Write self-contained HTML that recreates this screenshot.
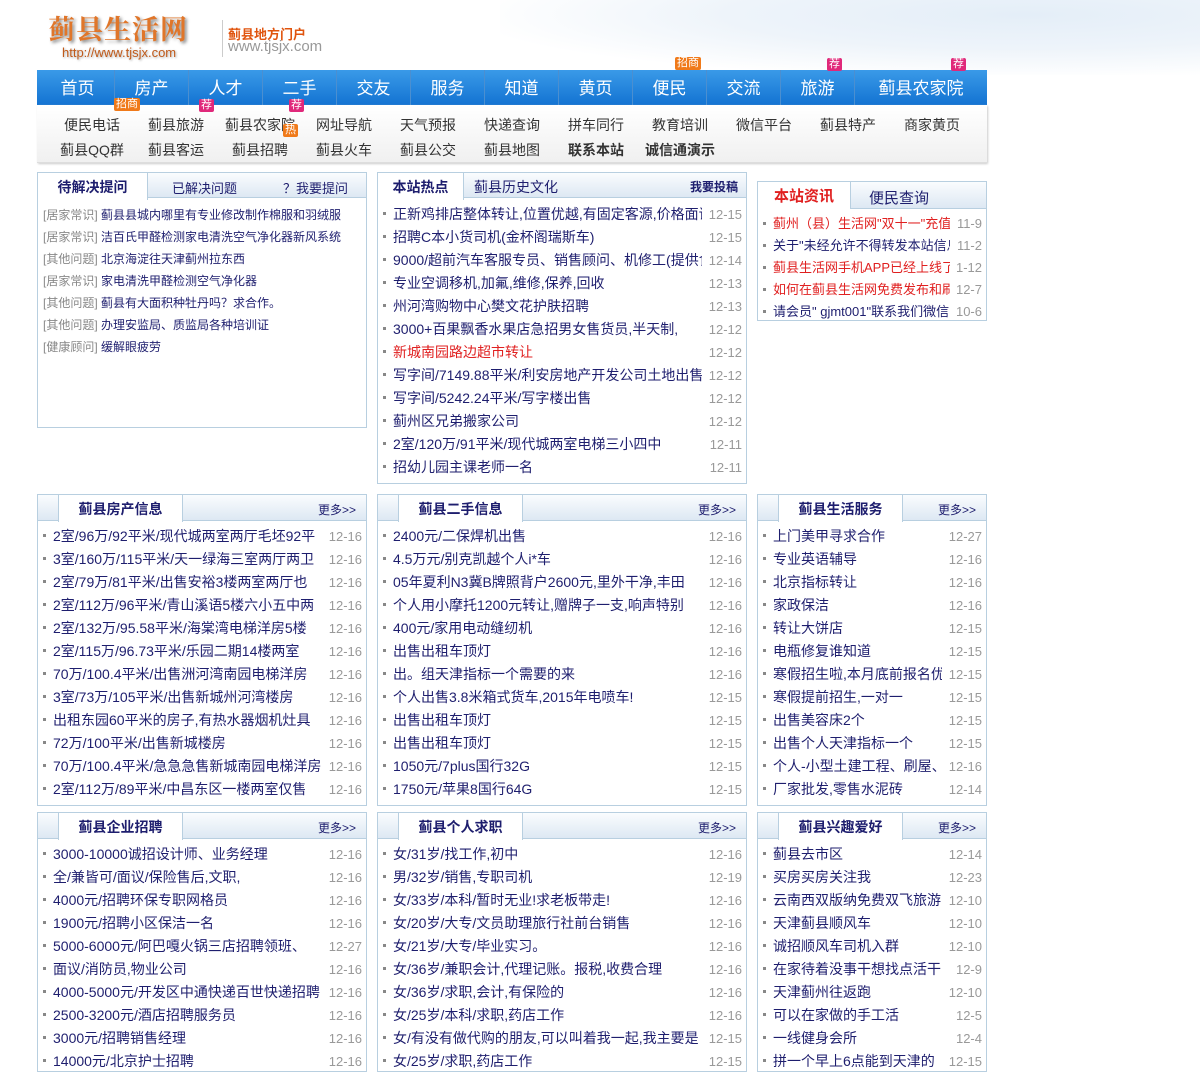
<!DOCTYPE html>
<html><head><meta charset="utf-8"><style>
*{margin:0;padding:0;box-sizing:border-box}
body{width:1200px;height:1063px;overflow:hidden;background:#fff;font-family:"Liberation Sans","Noto Sans CJK SC",sans-serif;font-size:14px;color:#1e1e6e;position:relative}
.bgsky{position:absolute;left:500px;top:0;width:700px;height:75px;background:radial-gradient(ellipse at 75% 20%,#e4eef8 0%,#eef4fa 40%,rgba(255,255,255,0) 75%);}
.logo{position:absolute;left:48px;top:8px;width:155px}
.logo .t{font-size:27px;font-weight:bold;color:#e0762a;letter-spacing:1px;text-shadow:2px 2px 3px #888;font-family:"Noto Serif CJK SC",serif}
.logo .u{font-size:13px;color:#c05a1a;margin-left:14px;text-shadow:1px 1px 2px #aaa;margin-top:-2px}
.sep{position:absolute;left:222px;top:20px;width:1px;height:37px;background:#ccc}
.slog{position:absolute;left:228px;top:24px;font-size:13px;font-weight:bold;color:#e0540e}
.www{position:absolute;left:228px;top:38px;font-size:15px;color:#999}
.nav{position:absolute;left:37px;top:70px;width:950px;height:35px;background:linear-gradient(#3a9ae8,#1373d2);display:flex;padding-left:4px}
.nav div{width:74px;text-align:center;color:#fff;font-size:17px;line-height:38px;border-right:1px solid #4b8fd0;position:relative}
.nav div:last-child{width:132px;border:none}
.sub{position:absolute;left:37px;top:105px;width:950px;height:58px;background:linear-gradient(#fff,#f0f0f0);border-bottom:1px solid #ddd;box-shadow:1px 1px 2px #ccc}
.row{position:absolute;left:13px;display:flex}
.row div{width:84px;text-align:center;font-size:14px;color:#333}
.badge{position:absolute;font-size:11px;color:#fff;line-height:13px;padding:0 2px;border-radius:2px}
.o{background:#f07a1a}.p{background:#e0287a}
.box{position:absolute;border:1px solid #b8cfe0;background:#fff;overflow:hidden}
.hd{height:26px;background:linear-gradient(#fafcfe,#dde8f3);border-bottom:1px solid #b8cfe0;position:relative}
.tab{position:absolute;top:0;height:27px;background:#fff;border-left:1px solid #b8cfe0;border-right:1px solid #b8cfe0;text-align:center;font-weight:bold;font-size:14px;line-height:28px;color:#1e1e6e}
.more{position:absolute;right:10px;top:6px;font-size:12px;color:#1e1e6e}
ul{list-style:none}
li{height:23px;line-height:23px;white-space:nowrap;position:relative;padding-left:15px;overflow:hidden}
li:before{content:"";position:absolute;left:5px;top:9px;width:3px;height:3px;background:#888}
li span{position:absolute;right:0;top:0;background:#fff;color:#999;font-size:13px;width:44px;text-align:right;padding-right:4px}
.r{color:#e02020}
.q li{font-size:12px;height:22px;line-height:22px;padding-left:5px}
.q li:before{display:none}
.q i{font-style:normal;color:#888}
</style></head><body>
<div class="bgsky"></div>
<div class="logo"><div class="t">蓟县生活网</div><div class="u">http://www.tjsjx.com</div></div>
<div class="sep"></div>
<div class="slog">蓟县地方门户</div>
<div class="www">www.tjsjx.com</div>
<div class="nav"><div>首页</div><div>房产</div><div>人才</div><div>二手</div><div>交友</div><div>服务</div><div>知道</div><div>黄页</div><div>便民<span class="badge o" style="left:42px;top:-13px">招商</span></div><div>交流</div><div>旅游<span class="badge p" style="left:46px;top:-12px">荐</span></div><div>蓟县农家院<span class="badge p" style="left:96px;top:-12px">荐</span></div></div>
<div class="sub">
<div class="row" style="top:10px"><div>便民电话</div><div>蓟县旅游</div><div>蓟县农家院</div><div>网址导航</div><div>天气预报</div><div>快递查询</div><div>拼车同行</div><div>教育培训</div><div>微信平台</div><div>蓟县特产</div><div>商家黄页</div></div>
<div class="row" style="top:35px"><div>蓟县QQ群</div><div>蓟县客运</div><div>蓟县招聘</div><div>蓟县火车</div><div>蓟县公交</div><div>蓟县地图</div><div style="font-weight:bold">联系本站</div><div style="font-weight:bold">诚信通演示</div></div>
<span class="badge o" style="left:77px;top:-7px">招商</span>
<span class="badge p" style="left:162px;top:-6px">荐</span>
<span class="badge p" style="left:252px;top:-6px">荐</span>
<span class="badge o" style="left:246px;top:19px">热</span>
</div>

<div class="box" style="left:37px;top:172px;width:330px;height:256px">
<div class="hd" style="height:25px"><div class="tab" style="left:0;width:110px;border-left:none;color:#1e1e6e">待解决提问</div><span style="position:absolute;left:134px;top:5px;font-size:13px">已解决问题</span><span style="position:absolute;left:245px;top:5px;font-size:13px">？我要提问</span></div>
<ul class="q" style="margin-top:6px">
<li><i>[居家常识]</i> 蓟县县城内哪里有专业修改制作棉服和羽绒服</li>
<li><i>[居家常识]</i> 洁百氏甲醛检测家电清洗空气净化器新风系统</li>
<li><i>[其他问题]</i> 北京海淀往天津蓟州拉东西</li>
<li><i>[居家常识]</i> 家电清洗甲醛检测空气净化器</li>
<li><i>[其他问题]</i> 蓟县有大面积种牡丹吗？求合作。</li>
<li><i>[其他问题]</i> 办理安监局、质监局各种培训证</li>
<li><i>[健康顾问]</i> 缓解眼疲劳</li>
</ul></div>

<div class="box" style="left:377px;top:172px;width:370px;height:312px">
<div class="hd" style="height:25px"><div class="tab" style="left:0;width:86px;border-left:none">本站热点</div><span style="position:absolute;left:96px;top:4px;font-size:14px">蓟县历史文化</span><span style="position:absolute;right:8px;top:5px;font-size:12px;font-weight:bold">我要投稿</span></div>
<ul style="margin-top:5px">
<li>正新鸡排店整体转让,位置优越,有固定客源,价格面议<span>12-15</span></li>
<li>招聘C本小货司机(金杯阁瑞斯车)<span>12-15</span></li>
<li>9000/超前汽车客服专员、销售顾问、机修工(提供食宿)<span>12-14</span></li>
<li>专业空调移机,加氟,维修,保养,回收<span>12-13</span></li>
<li>州河湾购物中心樊文花护肤招聘<span>12-13</span></li>
<li>3000+百果飘香水果店急招男女售货员,半天制,<span>12-12</span></li>
<li class="r">新城南园路边超市转让<span>12-12</span></li>
<li>写字间/7149.88平米/利安房地产开发公司土地出售<span>12-12</span></li>
<li>写字间/5242.24平米/写字楼出售<span>12-12</span></li>
<li>蓟州区兄弟搬家公司<span>12-12</span></li>
<li>2室/120万/91平米/现代城两室电梯三小四中<span>12-11</span></li>
<li>招幼儿园主课老师一名<span>12-11</span></li>
</ul></div>

<div class="box" style="left:757px;top:181px;width:230px;height:140px">
<div class="hd" style="height:27px"><div class="tab" style="left:0;width:93px;border-left:none;color:#e02020;font-size:15px;line-height:30px">本站资讯</div><span style="position:absolute;left:111px;top:5px;font-size:15px">便民查询</span></div>
<ul style="margin-top:4px;font-size:13px">
<li class="r" style="height:22px;line-height:22px">蓟州（县）生活网"双十一"充值大<span style="width:36px">11-9</span></li>
<li style="height:22px;line-height:22px">关于"未经允许不得转发本站信息<span style="width:36px">11-2</span></li>
<li class="r" style="height:22px;line-height:22px">蓟县生活网手机APP已经上线了<span style="width:36px">1-12</span></li>
<li class="r" style="height:22px;line-height:22px">如何在蓟县生活网免费发布和刷新<span style="width:36px">12-7</span></li>
<li style="height:22px;line-height:22px">请会员" gjmt001"联系我们微信<span style="width:36px">10-6</span></li>
</ul></div>

<div class="box" style="left:37px;top:494px;width:330px;height:312px">
<div class="hd"><div class="tab" style="left:20px;width:125px">蓟县房产信息</div><span class="more">更多&gt;&gt;</span></div>
<ul style="margin-top:4px">
<li>2室/96万/92平米/现代城两室两厅毛坯92平<span>12-16</span></li>
<li>3室/160万/115平米/天一绿海三室两厅两卫<span>12-16</span></li>
<li>2室/79万/81平米/出售安裕3楼两室两厅也<span>12-16</span></li>
<li>2室/112万/96平米/青山溪语5楼六小五中两<span>12-16</span></li>
<li>2室/132万/95.58平米/海棠湾电梯洋房5楼<span>12-16</span></li>
<li>2室/115万/96.73平米/乐园二期14楼两室<span>12-16</span></li>
<li>70万/100.4平米/出售洲河湾南园电梯洋房<span>12-16</span></li>
<li>3室/73万/105平米/出售新城州河湾楼房<span>12-16</span></li>
<li>出租东园60平米的房子,有热水器烟机灶具<span>12-16</span></li>
<li>72万/100平米/出售新城楼房<span>12-16</span></li>
<li>70万/100.4平米/急急急售新城南园电梯洋房<span>12-16</span></li>
<li>2室/112万/89平米/中昌东区一楼两室仅售<span>12-16</span></li>
</ul></div>

<div class="box" style="left:377px;top:494px;width:370px;height:312px">
<div class="hd"><div class="tab" style="left:20px;width:125px">蓟县二手信息</div><span class="more">更多&gt;&gt;</span></div>
<ul style="margin-top:4px">
<li>2400元/二保焊机出售<span>12-16</span></li>
<li>4.5万元/别克凯越个人i*车<span>12-16</span></li>
<li>05年夏利N3冀B牌照背户2600元,里外干净,丰田<span>12-16</span></li>
<li>个人用小摩托1200元转让,赠牌子一支,响声特别<span>12-16</span></li>
<li>400元/家用电动缝纫机<span>12-16</span></li>
<li>出售出租车顶灯<span>12-16</span></li>
<li>出。组天津指标一个需要的来<span>12-16</span></li>
<li>个人出售3.8米箱式货车,2015年电喷车!<span>12-15</span></li>
<li>出售出租车顶灯<span>12-15</span></li>
<li>出售出租车顶灯<span>12-15</span></li>
<li>1050元/7plus国行32G<span>12-15</span></li>
<li>1750元/苹果8国行64G<span>12-15</span></li>
</ul></div>

<div class="box" style="left:757px;top:494px;width:230px;height:312px">
<div class="hd"><div class="tab" style="left:20px;width:125px">蓟县生活服务</div><span class="more">更多&gt;&gt;</span></div>
<ul style="margin-top:4px">
<li>上门美甲寻求合作<span>12-27</span></li>
<li>专业英语辅导<span>12-16</span></li>
<li>北京指标转让<span>12-16</span></li>
<li>家政保洁<span>12-16</span></li>
<li>转让大饼店<span>12-15</span></li>
<li>电瓶修复谁知道<span>12-15</span></li>
<li>寒假招生啦,本月底前报名优惠<span>12-15</span></li>
<li>寒假提前招生,一对一<span>12-15</span></li>
<li>出售美容床2个<span>12-15</span></li>
<li>出售个人天津指标一个<span>12-15</span></li>
<li>个人-小型土建工程、刷屋、<span>12-16</span></li>
<li>厂家批发,零售水泥砖<span>12-14</span></li>
</ul></div>

<div class="box" style="left:37px;top:812px;width:330px;height:260px">
<div class="hd"><div class="tab" style="left:20px;width:125px">蓟县企业招聘</div><span class="more">更多&gt;&gt;</span></div>
<ul style="margin-top:4px">
<li>3000-10000诚招设计师、业务经理<span>12-16</span></li>
<li>全/兼皆可/面议/保险售后,文职,<span>12-16</span></li>
<li>4000元/招聘环保专职网格员<span>12-16</span></li>
<li>1900元/招聘小区保洁一名<span>12-16</span></li>
<li>5000-6000元/阿巴嘎火锅三店招聘领班、<span>12-27</span></li>
<li>面议/消防员,物业公司<span>12-16</span></li>
<li>4000-5000元/开发区中通快递百世快递招聘<span>12-16</span></li>
<li>2500-3200元/酒店招聘服务员<span>12-16</span></li>
<li>3000元/招聘销售经理<span>12-16</span></li>
<li>14000元/北京护士招聘<span>12-16</span></li>
</ul></div>

<div class="box" style="left:377px;top:812px;width:370px;height:260px">
<div class="hd"><div class="tab" style="left:20px;width:125px">蓟县个人求职</div><span class="more">更多&gt;&gt;</span></div>
<ul style="margin-top:4px">
<li>女/31岁/找工作,初中<span>12-16</span></li>
<li>男/32岁/销售,专职司机<span>12-19</span></li>
<li>女/33岁/本科/暂时无业!求老板带走!<span>12-16</span></li>
<li>女/20岁/大专/文员助理旅行社前台销售<span>12-16</span></li>
<li>女/21岁/大专/毕业实习。<span>12-16</span></li>
<li>女/36岁/兼职会计,代理记账。报税,收费合理<span>12-16</span></li>
<li>女/36岁/求职,会计,有保险的<span>12-16</span></li>
<li>女/25岁/本科/求职,药店工作<span>12-16</span></li>
<li>女/有没有做代购的朋友,可以叫着我一起,我主要是<span>12-15</span></li>
<li>女/25岁/求职,药店工作<span>12-15</span></li>
</ul></div>

<div class="box" style="left:757px;top:812px;width:230px;height:260px">
<div class="hd"><div class="tab" style="left:20px;width:125px">蓟县兴趣爱好</div><span class="more">更多&gt;&gt;</span></div>
<ul style="margin-top:4px">
<li>蓟县去市区<span>12-14</span></li>
<li>买房买房关注我<span>12-23</span></li>
<li>云南西双版纳免费双飞旅游<span>12-10</span></li>
<li>天津蓟县顺风车<span>12-10</span></li>
<li>诚招顺风车司机入群<span>12-10</span></li>
<li>在家待着没事干想找点活干,<span>12-9</span></li>
<li>天津蓟州往返跑<span>12-10</span></li>
<li>可以在家做的手工活<span>12-5</span></li>
<li>一线健身会所<span>12-4</span></li>
<li>拼一个早上6点能到天津的<span>12-15</span></li>
</ul></div>
</body></html>
